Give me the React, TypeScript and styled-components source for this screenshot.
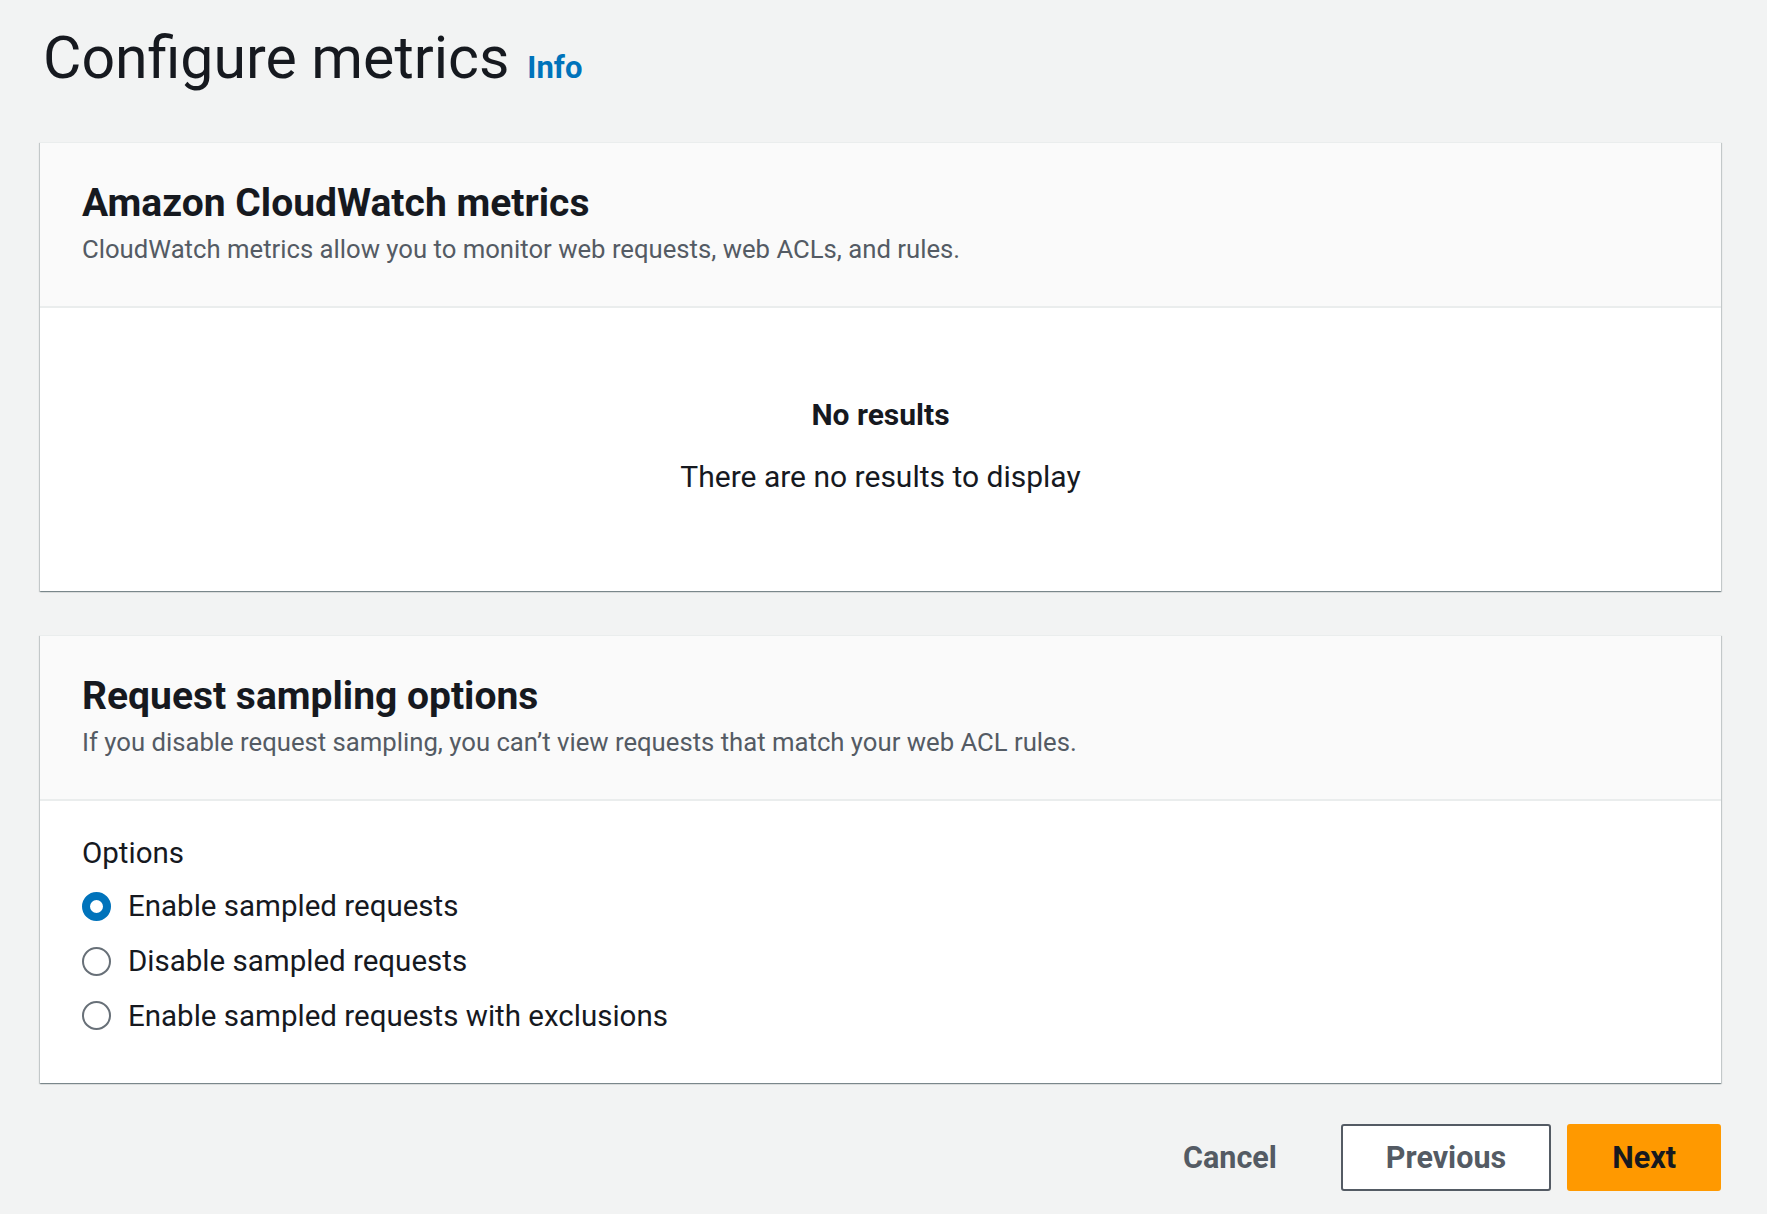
import React from "react";
import styled, { createGlobalStyle } from "styled-components";

const Global = createGlobalStyle`
  html, body { margin: 0; padding: 0; background: #f2f3f3; }
  body { font-family: Roboto, "Open Sans", "Noto Sans", sans-serif; color: #16191f; }
  * { box-sizing: border-box; }
`;

const Page = styled.div`
  min-height: 100vh;
  padding: 25px 46px 24px 40px;
  display: flex;
  flex-direction: column;
`;

const TitleRow = styled.div`
  display: flex;
  align-items: baseline;
  gap: 18px;
  height: 91px;
  padding-left: 3px;
`;

const H1 = styled.h1`
  margin: 0;
  font-size: 59px;
  line-height: 66px;
  font-weight: 400;
  color: #16191f;
`;

const InfoLink = styled.a`
  font-size: 31px;
  font-weight: 700;
  color: #0073bb;
  text-decoration: none;
`;

const Card = styled.section<{ $gap?: number }>`
  margin-top: ${(p) => p.$gap ?? 26}px;
  background: #ffffff;
  border-top: 1px solid #eaeded;
  box-shadow: 0 1px 1px 0 rgba(0, 28, 36, 0.3), 1px 1px 1px 0 rgba(0, 28, 36, 0.15),
    -1px 1px 1px 0 rgba(0, 28, 36, 0.15);
`;

const CardHeader = styled.header`
  height: 165px;
  background: #fafafa;
  border-bottom: 2px solid #eaeded;
  padding: 36px 42px 0;
`;

const CardTitle = styled.h2`
  margin: 0;
  font-size: 39px;
  line-height: 48px;
  font-weight: 700;
  color: #16191f;
`;

const CardDesc = styled.p`
  margin: 5px 0 0;
  font-size: 25.7px;
  line-height: 34px;
  color: #545b64;
`;

const CardBody = styled.div<{ $h: number }>`
  height: ${(p) => p.$h}px;
  padding: 0 42px;
`;

const Empty = styled.div`
  height: 100%;
  display: flex;
  flex-direction: column;
  align-items: center;
  justify-content: center;
  padding-bottom: 8px;
  gap: 28px;
`;

const EmptyTitle = styled.div`
  font-size: 30px;
  line-height: 34px;
  font-weight: 700;
  color: #16191f;
`;

const EmptyText = styled.div`
  font-size: 30px;
  line-height: 34px;
  color: #16191f;
`;

const Fieldset = styled.div`
  padding-top: 34px;
  display: flex;
  flex-direction: column;
`;

const Legend = styled.div`
  font-size: 29.5px;
  line-height: 36px;
  color: #16191f;
  margin-bottom: 8px;
`;

const RadioRow = styled.label`
  display: flex;
  align-items: center;
  gap: 17px;
  height: 54.7px;
  font-size: 29.5px;
  color: #16191f;
  cursor: pointer;
`;

const RadioDot = styled.span<{ $checked: boolean }>`
  width: 29px;
  height: 29px;
  border-radius: 50%;
  flex: none;
  background: #ffffff;
  border: ${(p) => (p.$checked ? "8px solid #0073bb" : "2px solid #687078")};
`;

const Footer = styled.div`
  margin-top: 41px;
  display: flex;
  justify-content: flex-end;
  align-items: center;
  gap: 16px;
`;

const Button = styled.button<{ $variant: "link" | "normal" | "primary" }>`
  height: 67px;
  padding: 0 ${(p) => (p.$variant === "link" ? 46 : 43)}px;
  font-family: inherit;
  font-size: 30.5px;
  font-weight: 700;
  border-radius: 3px;
  cursor: pointer;
  color: ${(p) => (p.$variant === "primary" ? "#16191f" : "#545b64")};
  background: ${(p) =>
    p.$variant === "primary" ? "#ff9900" : p.$variant === "normal" ? "#ffffff" : "transparent"};
  border: 2px solid
    ${(p) =>
      p.$variant === "primary" ? "#ff9900" : p.$variant === "normal" ? "#545b64" : "transparent"};
`;

const options = [
  "Enable sampled requests",
  "Disable sampled requests",
  "Enable sampled requests with exclusions",
];

export default function App() {
  const [selected, setSelected] = React.useState(0);
  return (
    <>
      <Global />
      <Page>
        <TitleRow>
          <H1>Configure metrics</H1>
          <InfoLink href="#">Info</InfoLink>
        </TitleRow>

        <Card>
          <CardHeader>
            <CardTitle>Amazon CloudWatch metrics</CardTitle>
            <CardDesc>
              CloudWatch metrics allow you to monitor web requests, web ACLs, and rules.
            </CardDesc>
          </CardHeader>
          <CardBody $h={283}>
            <Empty>
              <EmptyTitle>No results</EmptyTitle>
              <EmptyText>There are no results to display</EmptyText>
            </Empty>
          </CardBody>
        </Card>

        <Card $gap={44}>
          <CardHeader>
            <CardTitle>Request sampling options</CardTitle>
            <CardDesc>
              If you disable request sampling, you can’t view requests that match your web ACL rules.
            </CardDesc>
          </CardHeader>
          <CardBody $h={282}>
            <Fieldset>
              <Legend>Options</Legend>
              {options.map((o, i) => (
                <RadioRow key={o} onClick={() => setSelected(i)}>
                  <RadioDot $checked={selected === i} />
                  {o}
                </RadioRow>
              ))}
            </Fieldset>
          </CardBody>
        </Card>

        <Footer>
          <Button $variant="link">Cancel</Button>
          <Button $variant="normal">Previous</Button>
          <Button $variant="primary">Next</Button>
        </Footer>
      </Page>
    </>
  );
}
